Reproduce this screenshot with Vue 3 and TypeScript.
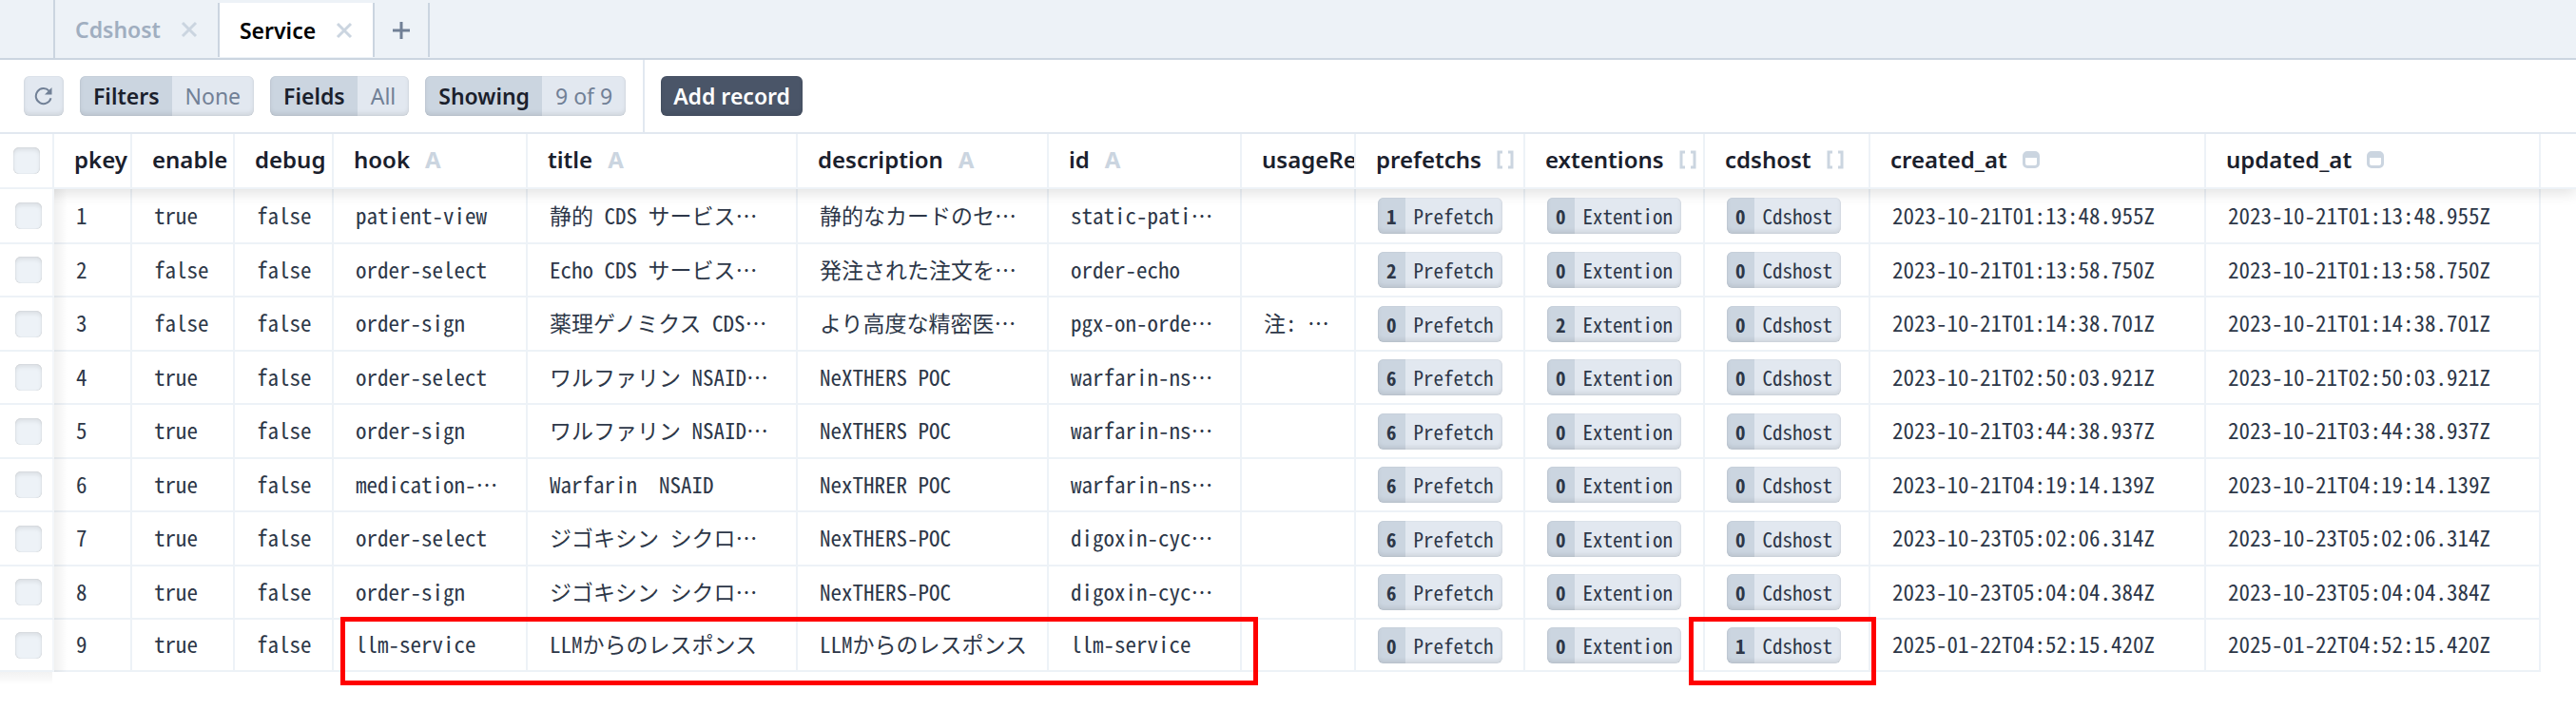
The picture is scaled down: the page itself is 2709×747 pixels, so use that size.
<script setup lang="ts">
import { ref } from 'vue'

type Kind = 'none' | 'text' | 'list' | 'date'

interface Column {
  key: string
  width: number
  kind: Kind
}

const columns: Column[] = [
  { key: 'pkey', width: 82, kind: 'none' },
  { key: 'enable', width: 108, kind: 'none' },
  { key: 'debug', width: 104, kind: 'none' },
  { key: 'hook', width: 204, kind: 'text' },
  { key: 'title', width: 284, kind: 'text' },
  { key: 'description', width: 264, kind: 'text' },
  { key: 'id', width: 203, kind: 'text' },
  { key: 'usageRe', width: 120, kind: 'none' },
  { key: 'prefetchs', width: 178, kind: 'list' },
  { key: 'extentions', width: 189, kind: 'list' },
  { key: 'cdshost', width: 174, kind: 'list' },
  { key: 'created_at', width: 353, kind: 'date' },
  { key: 'updated_at', width: 352, kind: 'date' },
]

interface Row {
  plain: string[]
  links: { count: number; label: string }[]
  time: string
}

function row(
  pkey: number, enable: boolean, hook: string, title: string, description: string,
  id: string, usage: string, counts: [number, number, number], time: string,
): Row {
  const labels = ['Prefetch', 'Extention', 'Cdshost']
  return {
    plain: [String(pkey), String(enable), 'false', hook, title, description, id, usage],
    links: counts.map((count, i) => ({ count, label: labels[i] })),
    time,
  }
}

const rows: Row[] = [
  row(1, true, 'patient-view', '静的 CDS サービス…', '静的なカードのセ…', 'static-pati…', '', [1, 0, 0], '2023-10-21T01:13:48.955Z'),
  row(2, false, 'order-select', 'Echo CDS サービス…', '発注された注文を…', 'order-echo', '', [2, 0, 0], '2023-10-21T01:13:58.750Z'),
  row(3, false, 'order-sign', '薬理ゲノミクス CDS…', 'より高度な精密医…', 'pgx-on-orde…', '注: …', [0, 2, 0], '2023-10-21T01:14:38.701Z'),
  row(4, true, 'order-select', 'ワルファリン NSAID…', 'NeXTHERS POC', 'warfarin-ns…', '', [6, 0, 0], '2023-10-21T02:50:03.921Z'),
  row(5, true, 'order-sign', 'ワルファリン NSAID…', 'NeXTHERS POC', 'warfarin-ns…', '', [6, 0, 0], '2023-10-21T03:44:38.937Z'),
  row(6, true, 'medication-…', 'Warfarin  NSAID', 'NexTHRER POC', 'warfarin-ns…', '', [6, 0, 0], '2023-10-21T04:19:14.139Z'),
  row(7, true, 'order-select', 'ジゴキシン シクロ…', 'NexTHERS-POC', 'digoxin-cyc…', '', [6, 0, 0], '2023-10-23T05:02:06.314Z'),
  row(8, true, 'order-sign', 'ジゴキシン シクロ…', 'NexTHERS-POC', 'digoxin-cyc…', '', [6, 0, 0], '2023-10-23T05:04:04.384Z'),
  row(9, true, 'llm-service', 'LLMからのレスポンス', 'LLMからのレスポンス', 'llm-service', '', [0, 0, 1], '2025-01-22T04:52:15.420Z'),
]

const tabs = ['Cdshost', 'Service']
const active = ref('Service')
const pills = [
  { label: 'Filters', value: 'None' },
  { label: 'Fields', value: 'All' },
  { label: 'Showing', value: '9 of 9' },
]
</script>

<template>
  <div class="studio">
    <nav class="tabs">
      <div v-for="t in tabs" :key="t" class="tab" :class="{ active: t === active }">
        <button class="tab-name" @click="active = t">{{ t }}</button>
        <button class="close" :aria-label="'Close ' + t">
          <svg width="18" height="18" viewBox="0 0 18 18"><path d="M2 2l14 14M16 2L2 16" /></svg>
        </button>
      </div>
      <button class="add-tab" aria-label="New tab">
        <svg width="18" height="18" viewBox="0 0 18 18"><path d="M9 0v18M0 9h18" /></svg>
      </button>
    </nav>

    <div class="toolbar">
      <div class="group">
        <button class="refresh" aria-label="Refresh">
          <svg width="20" height="20" viewBox="0 0 20 20">
            <path class="arc" d="M17.5 12.2A8 8 0 1 1 15.6 4.6" />
            <path class="tip" d="M18.5 1v7.5H11z" />
          </svg>
        </button>
        <button v-for="p in pills" :key="p.label" class="pill">
          <span class="pill-label">{{ p.label }}</span><span class="pill-value">{{ p.value }}</span>
        </button>
      </div>
      <div class="group last">
        <button class="add">Add record</button>
      </div>
    </div>

    <div class="grid">
      <table>
        <colgroup>
          <col class="check-col" />
          <col v-for="c in columns" :key="c.key" :style="{ width: c.width + 'px' }" />
          <col />
        </colgroup>
        <thead>
          <tr>
            <th class="check"><input type="checkbox" aria-label="Select all" /></th>
            <th v-for="c in columns" :key="c.key" scope="col">
              <div class="head">
                <span>{{ c.key }}</span>
                <span v-if="c.kind === 'text'" class="letter">A</span>
                <svg v-else-if="c.kind === 'list'" width="18" height="20" viewBox="0 0 18 20">
                  <path class="bracket" d="M6 2H2v16h4M12 2h4v16h-4" />
                </svg>
                <svg v-else-if="c.kind === 'date'" width="18" height="20" viewBox="0 0 18 20">
                  <path class="calendar" fill-rule="evenodd" d="M5 1h8a5 5 0 0 1 5 5v8a5 5 0 0 1-5 5H5a5 5 0 0 1-5-5V6a5 5 0 0 1 5-5zM3 8v6a2 2 0 0 0 2 2h8a2 2 0 0 0 2-2V8z" />
                </svg>
              </div>
            </th>
            <td class="rest"></td>
          </tr>
        </thead>
        <tbody lang="ja">
          <tr v-for="r in rows" :key="r.plain[0]">
            <td class="check"><input type="checkbox" :aria-label="'Select row ' + r.plain[0]" /></td>
            <td v-for="(text, i) in r.plain" :key="i" class="value">{{ text }}</td>
            <td v-for="l in r.links" :key="l.label">
              <button class="link"><b>{{ l.count }}</b><span>{{ l.label }}</span></button>
            </td>
            <td class="value">{{ r.time }}</td>
            <td class="value">{{ r.time }}</td>
            <td class="rest"></td>
          </tr>
        </tbody>
      </table>
      <div class="mark mark-service"></div>
      <div class="mark mark-host"></div>
    </div>
  </div>
</template>

<style>
body {
  margin: 0;
  background: #fff;
}
</style>

<style scoped>
.studio {
  font-family: "Noto Sans", "Noto Sans CJK JP", sans-serif;
  font-size: 23px;
  line-height: 30px;
  color: #1a202c;
}
button {
  font: inherit;
  color: inherit;
  border: 0;
  padding: 0;
  margin: 0;
  background: none;
  cursor: pointer;
}
svg {
  display: block;
  flex: none;
  fill: none;
}
.tabs {
  display: flex;
  align-items: flex-end;
  box-sizing: border-box;
  height: 63px;
  padding-left: 56px;
  background: #edf2f7;
  border-bottom: 2px solid #cbd5e0;
}
.tab {
  display: flex;
  align-items: center;
  gap: 21px;
  box-sizing: border-box;
  height: 61px;
  padding: 0 21px;
  border-left: 2px solid #cbd5e0;
  color: #a0aec0;
  font-weight: 600;
}
.tab.active {
  height: 57px;
  margin-bottom: 1px;
  background: #fff;
  border-right: 2px solid #cbd5e0;
  color: #000;
}
.close svg {
  stroke: #cbd5e0;
  stroke-width: 3;
}
.add-tab {
  display: flex;
  align-items: center;
  justify-content: center;
  width: 58px;
  height: 57px;
  margin-bottom: 1px;
  border-right: 2px solid #cbd5e0;
}
.add-tab svg {
  stroke: #718096;
  stroke-width: 3;
}
.toolbar {
  display: flex;
  height: 76px;
  border-bottom: 2px solid #e2e8f0;
}
.group {
  display: flex;
  align-items: center;
  gap: 17px;
  padding: 0 18px 0 25px;
  border-right: 2px solid #e2e8f0;
}
.group.last {
  padding-left: 17px;
  border: 0;
}
.refresh,
.pill,
.add {
  display: flex;
  align-items: center;
  height: 42px;
  border-radius: 6px;
  overflow: hidden;
  background: #e2e8f0;
  position: relative;
}
.refresh::after,
.pill::after,
.add::after,
.link::after {
  content: "";
  position: absolute;
  inset: 0;
  border-radius: 6px;
  box-shadow: inset 0 0 1px rgba(0, 0, 0, 0.2), inset 0 -3px 4px rgba(0, 0, 0, 0.08);
}
.refresh {
  width: 42px;
  justify-content: center;
}
.arc {
  stroke: #718096;
  stroke-width: 2;
}
.tip {
  fill: #718096;
}
.pill-label,
.pill-value {
  padding: 6px 14px;
}
.pill-label {
  padding-right: 13px;
  background: #cbd5e0;
  font-weight: 600;
}
.pill-value {
  color: #718096;
}
.add {
  padding: 0 13px;
  background: #4a5568;
  color: #fff;
  font-weight: 600;
}
.grid {
  position: relative;
  overflow-x: auto;
  padding-bottom: 24px;
}
table {
  width: 100%;
  table-layout: fixed;
  border-collapse: separate;
  border-spacing: 0;
}
.check-col {
  width: 57px;
}
th,
td {
  box-sizing: border-box;
  padding: 0 0 0 23px;
  border-right: 2px solid #edf2f7;
  border-bottom: 2px solid #edf2f7;
  text-align: left;
  vertical-align: middle;
  white-space: pre;
  overflow: hidden;
}
thead {
  position: relative;
  box-shadow: 0 4px 14px rgba(0, 0, 0, 0.12);
}
th {
  height: 58px;
  padding-left: 21px;
  padding-bottom: 3px;
  font-size: 24px;
  font-weight: 600;
}
.head {
  display: flex;
  align-items: center;
  gap: 16px;
  line-height: 34px;
}
.head svg {
  margin-top: 1px;
}
.letter {
  color: #cbd5e0;
  font-weight: 700;
}
.bracket {
  stroke: #cbd5e0;
  stroke-width: 3;
}
.calendar {
  fill: #cbd5e0;
}
.rest {
  padding: 0;
  border-right: 0;
}
tbody .rest {
  border-bottom: 0;
}
tbody td {
  height: 56px;
  font-family: "Noto Sans CJK JP", sans-serif;
  font-feature-settings: "hwid";
  font-size: 23px;
  font-weight: 400;
  color: #2d3748;
}
tbody td.value {
  padding-bottom: 3px;
}
tbody tr:nth-child(odd) td {
  height: 57px;
}
tbody tr:first-child td {
  height: 58px;
}
tbody tr:last-child td {
  height: 55px;
}
th.check,
tbody td.check {
  padding-left: 14px;
  padding-bottom: 0;
  background: #fff;
}
tbody td.check {
  position: relative;
  padding-left: 16px;
  overflow: visible;
  border-right-color: #f3f6f9;
}
tbody td.check::after {
  content: "";
  position: absolute;
  top: 0;
  bottom: -2px;
  left: calc(100% + 2px);
  width: 14px;
  background: linear-gradient(to right, rgba(0, 0, 0, 0.06), transparent);
}
tbody tr:last-child td.check::before {
  content: "";
  position: absolute;
  top: calc(100% + 2px);
  left: 0;
  right: 0;
  height: 14px;
  background: linear-gradient(to bottom, rgba(0, 0, 0, 0.05), transparent);
}
input {
  appearance: none;
  display: block;
  width: 28px;
  height: 28px;
  margin: 0;
  border-radius: 6px;
  background: #edf2f7;
  box-shadow: inset 0 0 1px rgba(0, 0, 0, 0.25), inset 0 3px 4px rgba(0, 0, 0, 0.08);
}
input:checked {
  background: #718096;
}
.link {
  display: flex;
  position: relative;
  overflow: hidden;
  height: 38px;
  border-radius: 6px;
  background: #e2e8f0;
  font-size: 21px;
  font-weight: 400;
  font-feature-settings: "hwid";
  line-height: 38px;
}
.link b {
  padding: 0 9px;
  background: #cbd5e0;
  font-weight: 600;
}
.link span {
  padding: 0 9px;
}
.mark {
  position: absolute;
  top: 508px;
  box-sizing: border-box;
  height: 72px;
  border: 5px solid #f00;
  pointer-events: none;
}
.mark-service {
  left: 358px;
  width: 965px;
}
.mark-host {
  left: 1776px;
  width: 197px;
}
</style>
